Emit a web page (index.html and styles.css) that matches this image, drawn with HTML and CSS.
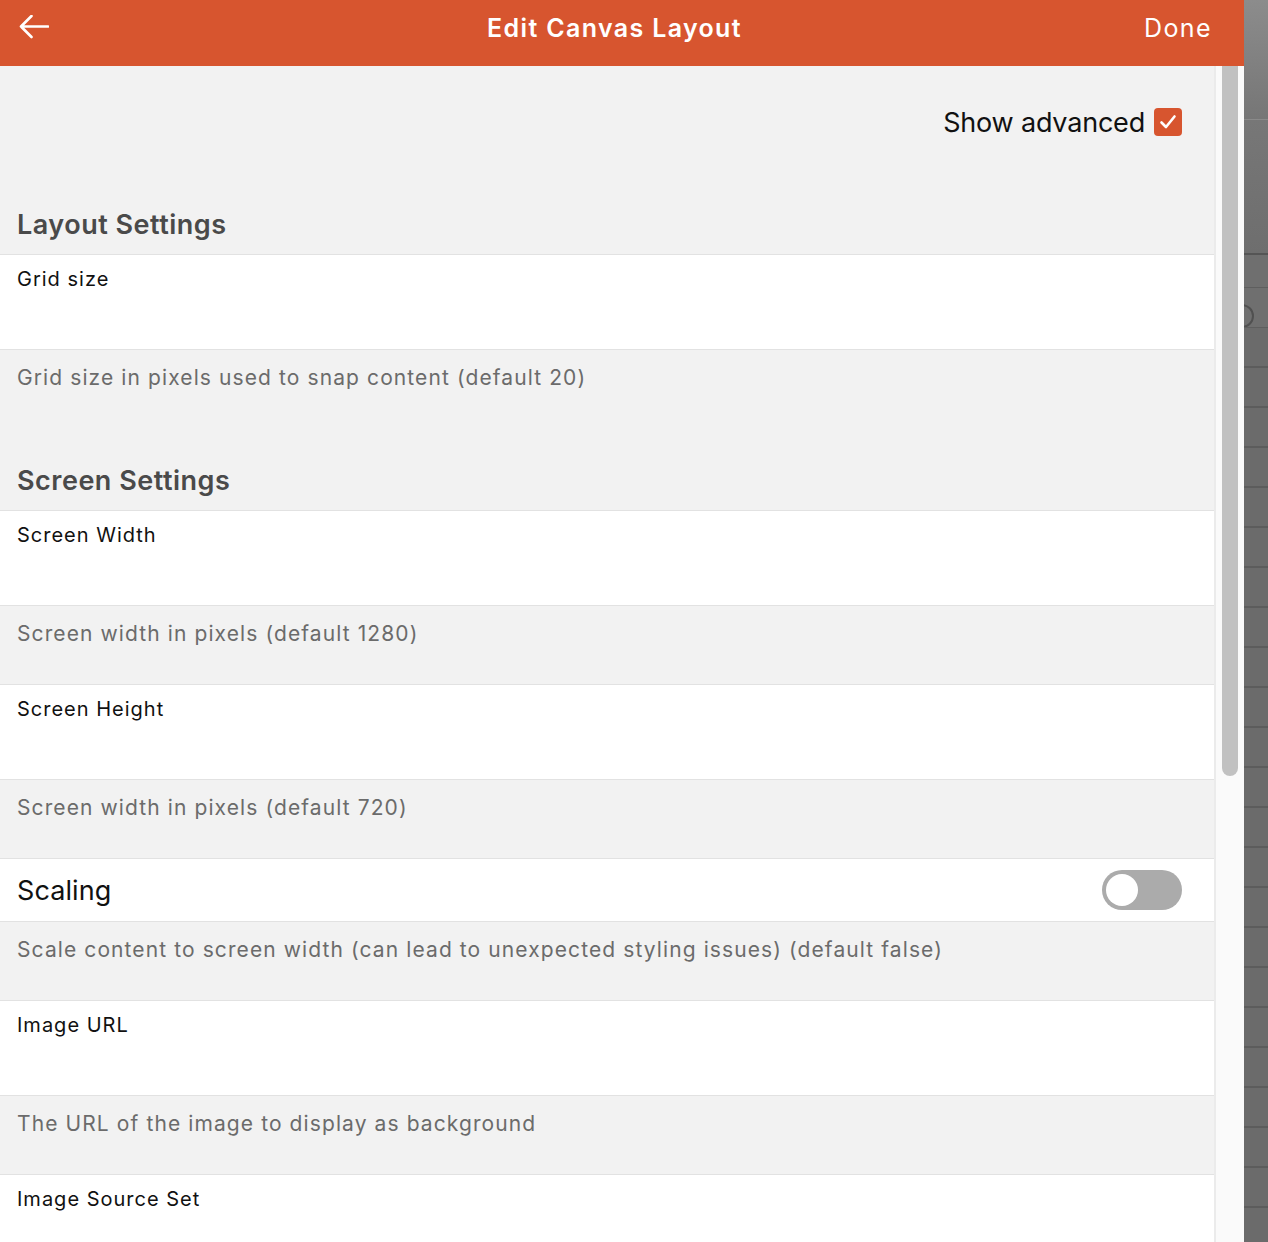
FILE: index.html
```html
<!DOCTYPE html>
<html>
<head>
<meta charset="utf-8">
<link rel="stylesheet" href="styles.css">
</head>
<body>
<div class="screen">
  <div class="app">
    <header class="topbar">
      <button class="back" aria-label="Back">
        <svg width="30" height="24" viewBox="0 0 30 24"><path d="M2 11.5 H29 M12.5 1 L2 11.5 L12.5 22" fill="none" stroke="#fff" stroke-width="2.6" stroke-linecap="round" stroke-linejoin="round"/></svg>
      </button>
      <h1 class="title">Edit Canvas Layout</h1>
      <button class="done">Done</button>
    </header>
    <div class="body">
      <main class="content">
        <div class="advanced">
          <span class="advanced-label">Show advanced</span>
          <span class="checkbox">
            <svg width="18" height="16" viewBox="0 0 18 16"><path d="M2.5 8.5 L7 13 L15.5 2.5" fill="none" stroke="#fff" stroke-width="2.6" stroke-linecap="round" stroke-linejoin="round"/></svg>
          </span>
        </div>

        <h2 class="section">Layout Settings</h2>
        <div class="field"><span class="label">Grid size</span></div>
        <p class="desc">Grid size in pixels used to snap content (default 20)</p>

        <h2 class="section">Screen Settings</h2>
        <div class="field"><span class="label">Screen Width</span></div>
        <p class="desc">Screen width in pixels (default 1280)</p>
        <div class="field"><span class="label">Screen Height</span></div>
        <p class="desc">Screen width in pixels (default 720)</p>
        <div class="field toggle-row">
          <span class="label big">Scaling</span>
          <span class="toggle"><span class="knob"></span></span>
        </div>
        <p class="desc">Scale content to screen width (can lead to unexpected styling issues) (default false)</p>
        <div class="field"><span class="label">Image URL</span></div>
        <p class="desc">The URL of the image to display as background</p>
        <div class="field"><span class="label">Image Source Set</span></div>
      </main>
      <div class="scrolltrack"><div class="thumb"></div></div>
    </div>
  </div>
  <div class="backdrop">
    <div class="bd-top"></div>
    <div class="bd-band"></div>
    <div class="bd-cell"></div>
    <div class="bd-cell circle-cell"><span class="bd-circle"></span></div>
    <div class="bd-grid"></div>
  </div>
</div>
</body>
</html>
```

FILE: styles.css
```css
* { box-sizing: border-box; }
html, body {
  margin: 0;
  padding: 0;
  height: 100%;
  overflow: hidden;
}
body {
  font-family: Inter, "Noto Sans", "Liberation Sans", sans-serif;
  background: #f2f2f2;
}
.screen {
  display: flex;
  width: 1268px;
  height: 1242px;
}
.app {
  width: 1244px;
  display: flex;
  flex-direction: column;
  height: 100%;
}
.topbar {
  height: 66px;
  flex: none;
  background: #d7552f;
  display: flex;
  align-items: center;
  padding: 0 32px 10px 19px;
  color: #fff;
}
.back {
  background: none;
  border: 0;
  padding: 0;
  width: 30px;
  height: 24px;
  display: flex;
  margin-top: -2px;
}
.title {
  flex: 1;
  margin: 0;
  text-align: center;
  font-size: 25px;
  font-weight: 600;
  padding-left: 36px;
  letter-spacing: 1.35px;
}
.done {
  background: none;
  border: 0;
  padding: 0;
  color: #fff;
  font-family: inherit;
  font-size: 25px;
  font-weight: 400;
  letter-spacing: 1.4px;
}
.body {
  flex: 1;
  display: flex;
  min-height: 0;
}
.content {
  width: 1214px;
  flex: none;
  background: #f2f2f2;
  overflow: hidden;
}
.scrolltrack {
  flex: 1;
  background: #fafafa;
  border-left: 2px solid #ebebeb;
  padding: 0 6px 0 6px;
}
.thumb {
  width: 16px;
  height: 710px;
  background: #c1c1c1;
  border-radius: 0 0 8px 8px;
}
.advanced {
  height: 106px;
  display: flex;
  align-items: center;
  justify-content: flex-end;
  padding: 6px 32px 0 0;
  gap: 9px;
}
.advanced-label {
  font-size: 27px;
  color: #111;
  letter-spacing: -0.2px;
}
.checkbox {
  width: 28px;
  height: 28px;
  background: #d7552f;
  border-radius: 4px;
  display: flex;
  align-items: center;
  justify-content: center;
}
.section {
  margin: 0;
  height: 82px;
  padding: 36px 17px 0;
  font-size: 27px;
  font-weight: 600;
  color: #4a4a4a;
  letter-spacing: 0.5px;
}
.field {
  background: #fff;
  border-top: 1px solid #e2e2e2;
  border-bottom: 1px solid #e2e2e2;
  height: 96px;
  padding: 12px 17px 0;
}
.label {
  font-size: 20px;
  color: #111;
  letter-spacing: 1px;
}
.toggle-row {
  height: 64px;
  padding: 0 32px 0 17px;
  display: flex;
  align-items: center;
  justify-content: space-between;
}
.label.big {
  font-size: 27px;
  letter-spacing: 0.1px;
}
.toggle {
  width: 80px;
  height: 40px;
  border-radius: 20px;
  background: #ababab;
  padding: 4px;
  display: flex;
}
.knob {
  width: 32px;
  height: 32px;
  border-radius: 50%;
  background: #fff;
}
.desc {
  margin: 0;
  height: 78px;
  padding: 15px 17px 0;
  font-size: 21px;
  color: #6b6b6b;
  letter-spacing: 1.1px;
}
.backdrop {
  width: 24px;
  flex: none;
  background: #6b6b6b;
  display: flex;
  flex-direction: column;
}
.bd-top {
  height: 120px;
  flex: none;
  background: linear-gradient(#8c8c8c, #767676);
  border-bottom: 1px solid #8a8a8a;
}
.bd-band {
  height: 135px;
  flex: none;
  background: linear-gradient(#777, #6e6e6e);
  border-bottom: 2px solid #555;
}
.bd-cell {
  height: 33px;
  flex: none;
  background: #6f6f6f;
  border-bottom: 1px solid #5e5e5e;
}
.circle-cell {
  height: 40px;
  position: relative;
  overflow: hidden;
}
.bd-circle {
  position: absolute;
  left: -14px;
  top: 16px;
  width: 24px;
  height: 24px;
  border: 2px solid #505050;
  border-radius: 50%;
}
.bd-grid {
  flex: 1;
  background: repeating-linear-gradient(#6b6b6b 0 38px, #5c5c5c 38px 40px);
}
```
